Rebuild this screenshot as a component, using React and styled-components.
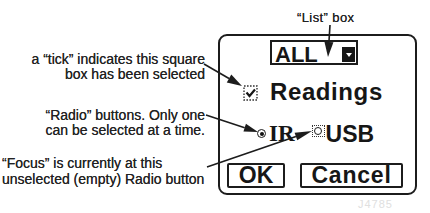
import React from 'react';
import styled, { createGlobalStyle } from 'styled-components';

const GlobalStyle = createGlobalStyle`
  html, body {
    margin: 0;
    padding: 0;
    background: #ffffff;
  }
`;

const Figure = styled.div`
  position: relative;
  width: 430px;
  height: 213px;
  display: flex;
  background: #ffffff;
  overflow: hidden;
  font-family: "Liberation Sans", Arial, sans-serif;
`;

const Notes = styled.div`
  width: 208px;
  display: flex;
  flex-direction: column;
  padding-top: 52px;
  box-sizing: border-box;
`;

const Note = styled.p`
  margin: ${p => p.$mt || 0}px 0 0;
  padding: ${p => (p.$align === 'left' ? '0 0 0 2px' : '0 3px 0 0')};
  font-size: 14px;
  line-height: ${p => p.$lh || 15}px;
  text-align: ${p => p.$align || 'right'};
  color: #222222;
  text-shadow: 0 0 0.5px #444;
  white-space: nowrap;
`;

const Side = styled.div`
  flex: 1;
  display: flex;
  flex-direction: column;
  padding: 10px 0 0 10px;
`;

const Caption = styled.div`
  padding-left: 79px;
  font-size: 13px;
  line-height: 15px;
  letter-spacing: 0.4px;
  color: #222222;
  text-shadow: 0 0 0.5px #444;
`;

const Dialog = styled.div`
  margin-top: 9px;
  width: 199px;
  height: 161px;
  box-sizing: border-box;
  border: 2px solid #1c1c1c;
  border-radius: 9px;
  display: flex;
  flex-direction: column;
  align-items: flex-start;
  color: #161616;
`;

const ListBox = styled.div`
  margin: 4px 0 0 50px;
  width: 88px;
  height: 25px;
  box-sizing: border-box;
  border: 2px solid #1c1c1c;
  display: flex;
  justify-content: space-between;
  align-items: flex-end;
  padding: 0 1px 1px 3px;
`;

const ListText = styled.span`
  align-self: flex-start;
  padding-top: 3px;
  font-size: 22px;
  font-weight: 700;
  line-height: 19px;
`;

const DropButton = styled.span`
  width: 13px;
  height: 15px;
  background: #161616;
  display: flex;
  align-items: center;
  justify-content: center;
  &::after {
    content: '';
    border-left: 3px solid transparent;
    border-right: 3px solid transparent;
    border-top: 4px solid #ffffff;
  }
`;

const Row = styled.div`
  margin: ${p => p.$mt}px 0 0 ${p => p.$ml}px;
  height: 26px;
  display: flex;
  align-items: flex-start;
`;

const Label = styled.span`
  margin-left: ${p => p.$ml || 0}px;
  font-family: ${p => (p.$serif ? '"Liberation Serif", "Times New Roman", serif' : '"Liberation Sans", Arial, sans-serif')};
  font-size: ${p => p.$size || 23}px;
  font-weight: 700;
  line-height: 26px;
  letter-spacing: ${p => p.$ls || 0}px;
`;

const Tick = styled.svg`
  margin-top: 6px;
  flex: none;
`;

const Radio = styled.span`
  margin-top: ${p => p.$mt}px;
  margin-left: ${p => p.$ml || 0}px;
  width: ${p => p.$size}px;
  height: ${p => p.$size}px;
  box-sizing: border-box;
  border: 1.5px solid #1c1c1c;
  border-radius: 50%;
  display: flex;
  align-items: center;
  justify-content: center;
  flex: none;
  &::after {
    content: '';
    width: 4px;
    height: 4px;
    border-radius: 50%;
    background: ${p => (p.$on ? '#111' : 'transparent')};
  }
`;

const Focus = styled.span`
  margin: 4px 0 0 ${p => p.$ml}px;
  width: 13px;
  height: 12px;
  box-sizing: border-box;
  border: 1.5px dotted #333;
  display: flex;
  align-items: center;
  justify-content: center;
  flex: none;
`;

const Button = styled.div`
  margin-left: ${p => p.$ml || 0}px;
  width: ${p => p.$w}px;
  height: 25px;
  box-sizing: border-box;
  border: 2px solid #1c1c1c;
  border-radius: 2px;
  text-align: center;
  font-size: 23px;
  font-weight: 700;
  line-height: 21px;
  letter-spacing: ${p => p.$ls || 0}px;
`;

const Mark = styled.div`
  margin: 3px 0 0 140px;
  font-size: 11px;
  letter-spacing: 1px;
  color: #e0e0e0;
`;

const Leaders = styled.svg`
  position: absolute;
  left: 0;
  top: 0;
  pointer-events: none;
`;

// leader lines from the notes to the dialog parts
const arrows = [
  { from: [330, 25], to: [328, 57], len: 15, w: 9 },
  { from: [204, 64], to: [242, 86], len: 15, w: 9 },
  { from: [206, 115], to: [258, 132], len: 14, w: 8 },
  { from: [207, 167], to: [312, 131], len: 17, w: 8 },
];

const Arrow = ({ from, to, len, w }) => {
  const [x1, y1] = from;
  const [x2, y2] = to;
  const d = Math.hypot(x2 - x1, y2 - y1);
  const ux = (x2 - x1) / d;
  const uy = (y2 - y1) / d;
  const bx = x2 - ux * len;
  const by = y2 - uy * len;
  const px = -uy * (w / 2);
  const py = ux * (w / 2);
  const head = `${x2},${y2} ${bx + px},${by + py} ${bx - px},${by - py}`;
  return (
    <g>
      <line x1={x1} y1={y1} x2={bx} y2={by} stroke="#1c1c1c" strokeWidth="1.6" />
      <polygon points={head} fill="#1c1c1c" />
    </g>
  );
};

export default function App() {
  return (
    <>
      <GlobalStyle />
      <Figure>
        <Notes>
          <Note>
            a &ldquo;tick&rdquo; indicates this square<br />box has been selected
          </Note>
          <Note $mt={26}>
            &ldquo;Radio&rdquo; buttons. Only one<br />can be selected at a time.
          </Note>
          <Note $mt={17} $lh={16} $align="left">
            &ldquo;Focus&rdquo; is currently at this<br />unselected (empty) Radio button
          </Note>
        </Notes>
        <Side>
          <Caption>&ldquo;List&rdquo; box</Caption>
          <Dialog>
            <ListBox>
              <ListText>ALL</ListText>
              <DropButton />
            </ListBox>
            <Row $mt={14} $ml={23}>
              <Tick width="15" height="16" viewBox="0 0 15 16">
                <rect x="1" y="1" width="13" height="14" fill="none" stroke="#333" strokeWidth="1.4" strokeDasharray="1.6 1.4" />
                <path d="M3.5 7.5 L6.5 11 L12 4.5" fill="none" stroke="#161616" strokeWidth="2.2" />
              </Tick>
              <Label $size={24} $ml={12} $ls={0.6}>Readings</Label>
            </Row>
            <Row $mt={16} $ml={37}>
              <Radio $on $size={9} $mt={8} />
              <Label $serif $ml={3}>IR</Label>
              <Focus $ml={17}>
                <Radio $size={8} $mt={0} />
              </Focus>
              <Label $ml={1}>USB</Label>
            </Row>
            <Row $mt={16} $ml={7}>
              <Button $w={58}>OK</Button>
              <Button $w={103} $ml={15} $ls={0.8}>Cancel</Button>
            </Row>
          </Dialog>
          <Mark>J4785</Mark>
        </Side>
        <Leaders width="430" height="213" viewBox="0 0 430 213">
          {arrows.map((a, i) => (
            <Arrow key={i} {...a} />
          ))}
        </Leaders>
      </Figure>
    </>
  );
}
